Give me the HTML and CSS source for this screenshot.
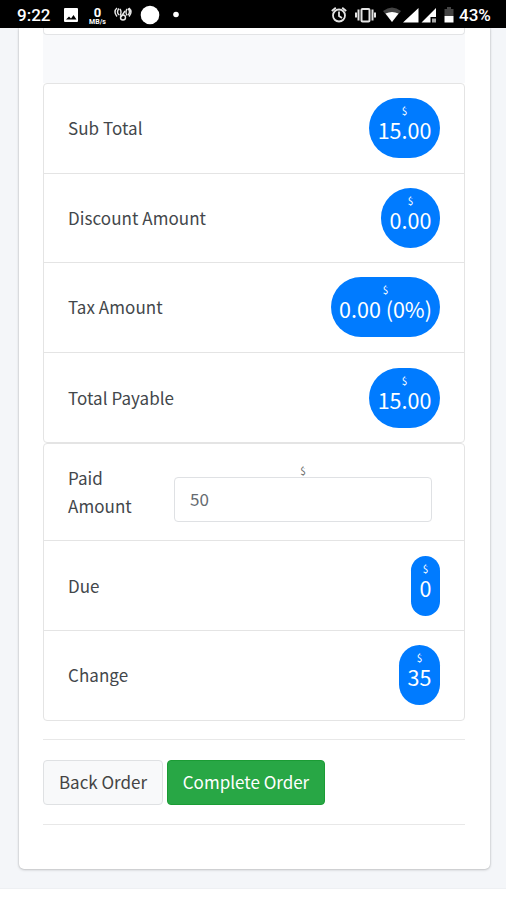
FILE: index.html
```html
<!DOCTYPE html>
<html lang="en">
<head>
<meta charset="utf-8">
<title>Order payment</title>
<link rel="stylesheet" href="styles.css">
</head>
<body>
<header class="status">
  <span class="clock">9:22</span>
  <svg class="icons-left" width="124" height="28" viewBox="0 0 124 28" fill="#fff">
    <path fill-rule="evenodd" d="M2 8h12a1 1 0 0 1 1 1v12a1 1 0 0 1-1 1H2a1 1 0 0 1-1-1V9a1 1 0 0 1 1-1zm1 11.500h10.500l-3-4.500-2.500 3.500-2-2z"/>
    <text class="net-num" x="34.500" y="17" text-anchor="middle">0</text>
    <text class="net-unit" x="34.500" y="24" text-anchor="middle">MB/s</text>
    <g fill="none" stroke="#e8e8e8" stroke-width="1.400">
      <path d="M54 8q-4 3.500 0 8.500M57 9q2 3 0 6.500M56 8.500q-3 3.500 0 6.500M66 8q4 3.500 0 8.500M64 9q-2 3 0 6.500M65 8.500q3 3.500 0 6.500"/>
      <path d="M62 11l-4 6"/><circle cx="60" cy="17.500" r="2.500"/>
    </g>
    <circle cx="87" cy="15" r="9.300"/><circle cx="113" cy="14.500" r="2.800"/>
  </svg>
  <svg class="icons-right" width="128" height="28" viewBox="0 0 128 28" fill="#fff">
    <g fill="none" stroke="#e4e4e4" stroke-width="1.800">
      <circle cx="9" cy="15.500" r="6"/><path d="M9 11.500v4.500l3 2M1.800 11l4-3.300M16.200 11l-4-3.300"/>
      <rect x="31.500" y="9" width="8" height="12.500" rx="1" stroke-width="2"/><path d="M28.500 9.500v11M42.500 9.500v11M26 12.500v5M45 12.500v5" stroke-width="2"/>
    </g>
    <path d="M53 11q9-7 18 0l-9 11z" fill="#444"/><path d="M55.500 13.500q6.500-3 13 0L62 22z"/>
    <path d="M73 22.500L88.500 8v14.500zM91.500 22.500L106 8v9h-5.500v5.500z"/>
    <path d="M102 18.500h4v4h-4z" fill="#aaa"/>
    <path d="M117 7h4v2h2.500v7h-9V9h2.500z" fill="#444"/><path d="M114.500 16h9v6.500h-9z"/>
  </svg>
  <span class="battery">43%</span>
</header>
<main class="page">
  <section class="card">
    <div class="previous"><div class="previous-box"></div></div>
    <ul class="group">
      <li class="row"><span>Sub Total</span><span class="pill w71"><small>$</small><b>15.00</b></span></li>
      <li class="row"><span>Discount Amount</span><span class="pill w59"><small>$</small><b>0.00</b></span></li>
      <li class="row"><span>Tax Amount</span><span class="pill w109"><small>$</small><b>0.00 (0%)</b></span></li>
      <li class="row"><span>Total Payable</span><span class="pill w71"><small>$</small><b>15.00</b></span></li>
    </ul>
    <ul class="group second">
      <li class="row paid"><span class="paid-label">Paid Amount</span>
        <label class="entry"><small>$</small><input type="text" value="50"></label></li>
      <li class="row"><span>Due</span><span class="pill w29"><small>$</small><b>0</b></span></li>
      <li class="row"><span>Change</span><span class="pill w41"><small>$</small><b>35</b></span></li>
    </ul>
    <div class="actions">
      <button class="btn back">Back Order</button>
      <button class="btn complete">Complete Order</button>
    </div>
  </section>
</main>
</body>
</html>
```

FILE: styles.css
```css
* { box-sizing: border-box; }
body { margin: 0; height: 900px; overflow: hidden; background: #fff; color: #43474b; font: 17px/28px "Noto Sans CJK SC", sans-serif; letter-spacing: .05px; }
.status { height: 28px; background: #000; color: #fff; display: flex; align-items: center; padding-left: 17px; font: 500 17px/28px Roboto, sans-serif; letter-spacing: 0; }
.clock { width: 46px; padding-top: 2px; }
.battery { padding-top: 2px; margin-left: 1px; }
.icons-right { margin-left: 143px; }
.net-num { font: bold 13px Roboto, sans-serif; }
.net-unit { font: bold 7px Roboto, sans-serif; }
.page { height: 861px; padding: 0 16px 0 19px; background: #f4f6f9; border-bottom: 1px solid #eef0f3; }
.card { height: 841px; padding: 0 25px 0 24px; background: #fff; border-radius: 0 0 5px 5px; box-shadow: 0 0 2px rgba(0,0,0,.22), 0 1px 3px rgba(0,0,0,.16); }
.previous { height: 55px; background: #f8f9fb; }
.previous-box { height: 7px; background: #fff; border: 1px solid #e3e4e6; border-top: 0; border-radius: 0 0 4px 4px; }
.group { list-style: none; margin: 0; padding: 0; border: 1px solid #e4e4e4; border-radius: 4px; }
.group.second { height: 278px; }
.row { display: flex; align-items: center; justify-content: space-between; height: 89.600px; padding: 0 24px; border-bottom: 1px solid #e4e4e4; }
.row:last-child { border-bottom: 0; }
.pill { display: flex; flex-direction: column; align-items: center; height: 60px; padding-top: 7px; background: #007bff; color: #fff; border-radius: 30px; white-space: nowrap; letter-spacing: 0; }
.w71 { width: 71px; } .w59 { width: 59px; } .w109 { width: 109px; } .w29 { width: 29px; } .w41 { width: 41px; }
small { font-size: 10px; line-height: 12px; }
.pill b { font-weight: 400; font-size: 21.500px; line-height: 26px; }
.second .row { height: 89.300px; }
.second .row.paid { height: 97px; padding-right: 32px; }
.paid-label { width: 80px; padding-bottom: 1px; }
.entry { display: flex; flex-direction: column; align-items: center; width: 258px; padding-top: 2px; }
.entry small { line-height: 11px; margin-bottom: 1px; color: #666; }
.entry input { width: 258px; height: 45px; padding: 0 15px 1px; border: 1px solid #dfe1e4; border-radius: 4px; font: inherit; color: #666b70; background: #fff; }
.actions { display: flex; gap: 4px; margin-top: 18px; padding: 20px 0 19px; border: solid #e8e8e8; border-width: 1px 0; height: 86px; }
.btn { height: 45px; padding: 0 0 1px; border: 1px solid #dfe1e3; border-radius: 4px; font: inherit; white-space: nowrap; }
.back { width: 120px; background: #f8f9fa; color: #444; }
.complete { width: 158px; background: #28a745; border-color: #1b9c35; color: #fff; }
```
